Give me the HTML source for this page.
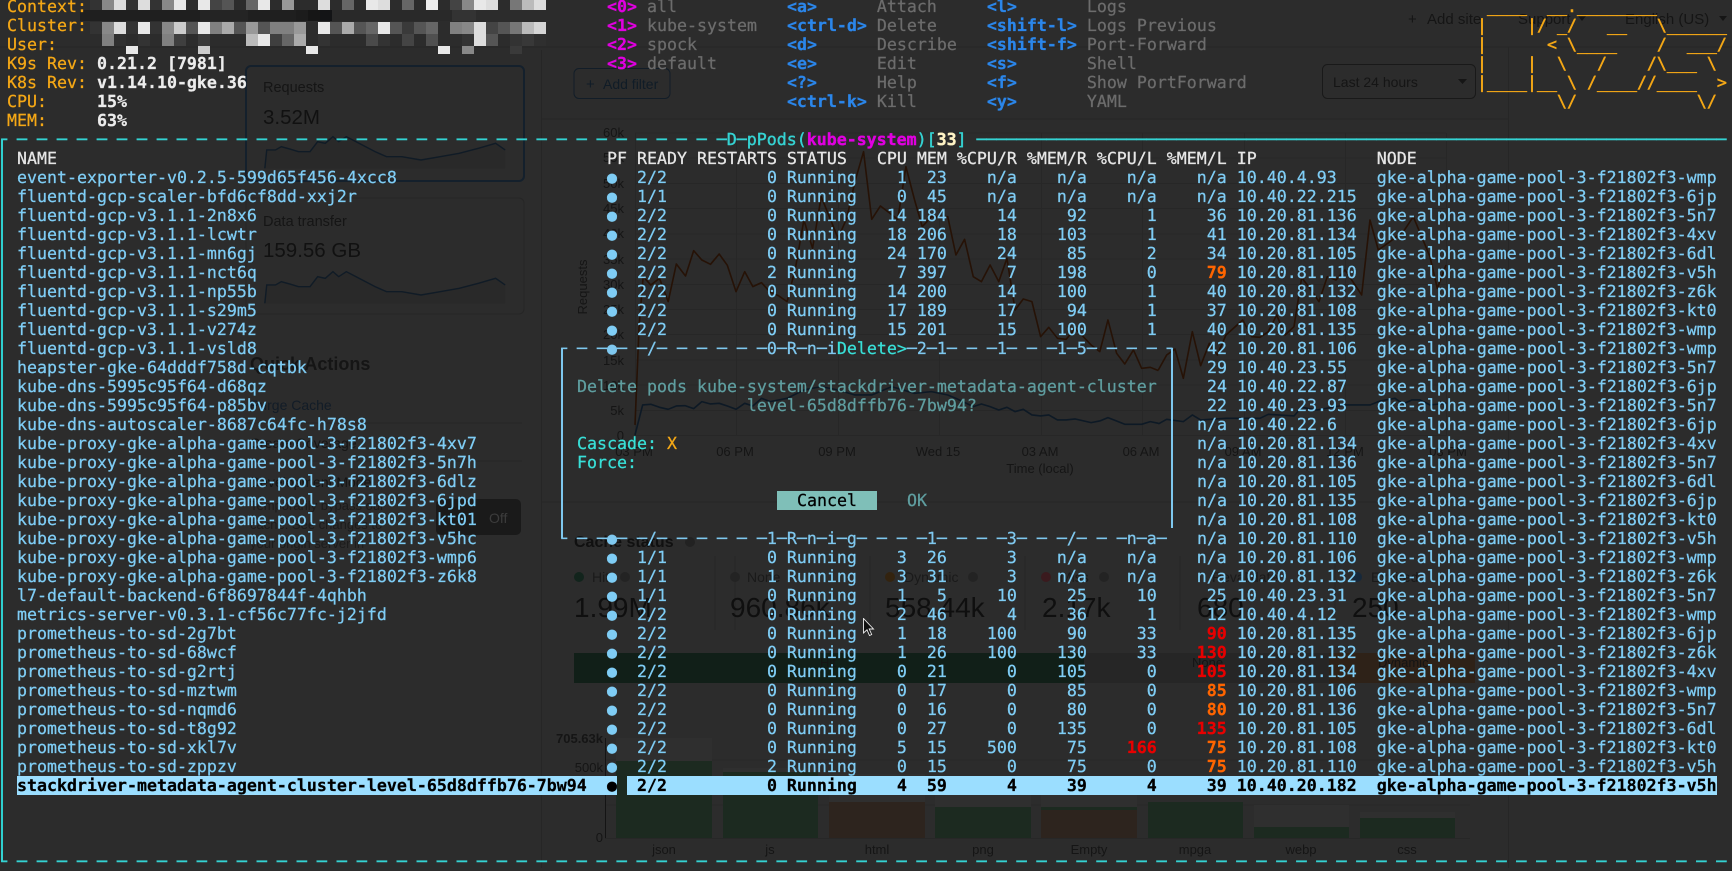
<!DOCTYPE html>
<html lang="en">
<head>
<meta charset="utf-8">
<title>k9s pods</title>
<style>
html,body{margin:0;padding:0;width:1732px;height:868px;overflow:hidden;background:#2c2c2c}
#bg{position:absolute;left:0;top:0}
#bg text{font-family:"Liberation Sans",sans-serif;fill:#151515}
pre{position:absolute;margin:0;font-family:"DejaVu Sans Mono","Liberation Mono",monospace;font-size:16.6px;line-height:19px;letter-spacing:.006px;color:#7fcdf5;text-rendering:geometricPrecision;font-kerning:none;white-space:pre;-webkit-text-stroke:.25px currentColor}
.w{color:#e6e6e6}.wb{color:#ececec;font-weight:bold}
.y{color:#f5a816}
.logo{-webkit-text-stroke:.45px currentColor}
.m{color:#e000e0;font-weight:bold}
.k{color:#2b86ea;font-weight:bold}
.g{color:#6c6c6c}
.c{color:#35d3d3;-webkit-text-stroke:.4px currentColor}
.cr{color:#fff3c4;font-weight:bold}
.r{color:#e80000;font-weight:bold}
.o{color:#ff6500;font-weight:bold}
.t{color:#5f9ea0}
.tc{color:#38e0d8}
.s{color:#000;font-weight:bold}
.box{position:absolute}
</style>
</head>
<body>
<svg id="bg" width="1732" height="868" viewBox="0 0 1732 868" xmlns="http://www.w3.org/2000/svg">
<!-- page structure -->
<g stroke="#262626" stroke-width="1" fill="none">
<path d="M0 47H1732M541.5 50V868M541 119H1509M1508.5 47V868M541 502H1509"/>
<path d="M245 423H522M245 461H522"/>
</g>
<!-- top bar -->
<text x="1408" y="24" font-size="15">+</text>
<text x="1427" y="24" font-size="15">Add site</text>
<text x="1518" y="24" font-size="15">Support</text>
<path d="M1578 16l8 0l-4 5z" fill="#151515"/>
<text x="1625" y="24" font-size="15">English (US)</text>
<path d="M1719 16l8 0l-4 5z" fill="#151515"/>
<!-- filter + select -->
<rect x="574" y="68.5" width="96" height="30" rx="5" fill="none" stroke="#121d28" stroke-width="1"/>
<text x="586" y="89" font-size="15" style="fill:#101c27">+</text>
<text x="603" y="89" font-size="14" style="fill:#101c27">Add filter</text>
<rect x="1322.500" y="64.500" width="153" height="34" rx="5" fill="none" stroke="#191919"/>
<text x="1333" y="87" font-size="14">Last 24 hours</text>
<path d="M1458 79l9 0l-4.500 5z" fill="#151515"/>
<!-- cards -->
<rect x="246" y="66" width="278" height="115" rx="5" fill="none" stroke="#14202c" stroke-width="2"/>
<text x="263" y="92" font-size="14.5">Requests</text>
<text x="263" y="124" font-size="20.500" style="fill:#111">3.52M</text>
<g transform="scale(.3827,.3333)">
<polygon fill="#292929" points="692,505 697,450 720,450 735,440 760,448 780,455 810,455 830,425 850,430 870,410 885,425 905,410 935,428 980,455 1010,470 1050,470 1100,480 1150,470 1200,460 1250,445 1295,430 1320,450 1320,505"/>
<polyline fill="none" stroke="#101b26" stroke-width="1.400" vector-effect="non-scaling-stroke" points="692,505 697,450 720,450 735,440 760,448 780,455 810,455 830,425 850,430 870,410 885,425 905,410 935,428 980,455 1010,470 1050,470 1100,480 1150,470 1200,460 1250,445 1295,430 1320,450"/>
</g>
<rect x="246" y="198" width="278" height="116" rx="5" fill="none" stroke="#262626" stroke-width="1"/>
<text x="263" y="226" font-size="14.5">Data transfer</text>
<text x="263" y="257" font-size="20.500" style="fill:#111">159.56 GB</text>
<g transform="translate(0,135) scale(.3827,.3333)">
<polygon fill="#292929" points="692,505 697,450 720,450 735,440 760,448 780,455 810,455 830,425 850,430 870,410 885,425 905,410 935,428 980,455 1010,470 1050,470 1100,480 1150,470 1200,460 1250,445 1295,430 1320,450 1320,505"/>
<polyline fill="none" stroke="#101b26" stroke-width="1.400" vector-effect="non-scaling-stroke" points="692,505 697,450 720,450 735,440 760,448 780,455 810,455 830,425 850,430 870,410 885,425 905,410 935,428 980,455 1010,470 1050,470 1100,480 1150,470 1200,460 1250,445 1295,430 1320,450"/>
</g>
<!-- quick actions -->
<text x="250" y="370" font-size="18" font-weight="bold" style="fill:#151515">Quick Actions</text>
<text x="250" y="410" font-size="14" style="fill:#121c27">Purge Cache</text>
<text x="250" y="448" font-size="14">Create Coverage</text>
<text x="250" y="487" font-size="14">Development Mode</text>
<text x="250" y="510" font-size="13" style="fill:#1c1c1c">Temporarily bypass our</text>
<text x="250" y="529" font-size="13" style="fill:#1c1c1c">cache. See changes to</text>
<text x="250" y="548" font-size="13" style="fill:#1c1c1c">your origin server in</text>
<rect x="436" y="499" width="85" height="36" rx="5" fill="#1a1a1a"/>
<text x="489" y="523" font-size="14" style="fill:#3c3c3c">Off</text>
<!-- main chart grid -->
<g stroke="#272727" fill="none">
<path d="M635 133H1446M635 158H1446M635 183.500H1446M635 208.500H1446M635 234H1446M635 259H1446M635 284.500H1446M635 309.500H1446M635 334.500H1446M635 360H1446M635 385H1446M635 410.500H1446M635 435.500H1446"/>
<path d="M635.500 133V436M736.500 133V436M838.500 133V436M939.500 133V436M1041.500 133V436M1142.500 133V436M1244.500 133V436M1345.500 133V436M1446.500 133V436"/>
</g>
<g font-size="13" text-anchor="end">
<text x="624" y="137">60k</text><text x="624" y="162">55k</text><text x="624" y="188">50k</text><text x="624" y="213">45k</text><text x="624" y="238">40k</text><text x="624" y="264">35k</text><text x="624" y="289">30k</text><text x="624" y="314">25k</text><text x="624" y="339">20k</text><text x="624" y="365">15k</text><text x="624" y="390">10k</text><text x="624" y="415">5k</text><text x="624" y="440">0</text>
</g>
<g font-size="13" text-anchor="middle">
<text x="634" y="456">03 PM</text><text x="735" y="456">06 PM</text><text x="837" y="456">09 PM</text><text x="938" y="456">Wed 15</text><text x="1040" y="456">03 AM</text><text x="1141" y="456">06 AM</text><text x="1243" y="456">09 AM</text><text x="1345" y="456">12 PM</text><text x="1448" y="456">03 PM</text>
<text x="1040" y="473">Time (local)</text>
<text transform="translate(587,287) rotate(-90)">Requests</text>
</g>
<!-- series -->
<g fill="none" stroke-width="1.600" stroke-linejoin="round">
<polyline transform="translate(560,120) scale(.5102,.3333)" vector-effect="non-scaling-stroke" stroke="#261206" points="147,915 155,620 163,470 178,495 195,475 212,545 228,432 246,468 262,392 278,420 295,433 312,402 328,436 345,515 362,455 378,500 395,488 412,517 428,527 445,545 462,440 478,300 495,385 512,230 528,290 545,355 562,295 578,185 595,95 611,298 628,258 645,278 662,298 678,140 695,240 710,320 728,290 760,290 776,405 793,358 810,470 826,485 843,435 860,485 876,415 892,570 908,537 925,545 942,650 958,622 975,655 992,658 1010,625 1041,675 1058,695 1074,600 1091,700 1107,732 1124,690 1140,745 1157,742 1173,752"/>
<polyline transform="translate(1150,200) scale(.3333)" vector-effect="non-scaling-stroke" stroke="#261206" points="25,510 50,465 75,447 100,535 127,395 152,497 178,430 202,465 228,405 278,360 305,410 330,412 355,395 380,345 405,405 432,380 455,233 480,265 507,305 532,230 558,240 585,210 635,285 660,60 685,150 720,125 762,92 790,50 815,110 840,170 862,265 888,195"/>
<polyline transform="translate(560,120) scale(.5102,.3333)" vector-effect="non-scaling-stroke" stroke="#0d1925" points="147,945 162,855 178,853 195,862 212,868 228,858 245,857 262,866 278,845 295,852 312,850 328,858 345,868 362,850 378,858 395,835 412,845 445,835 478,810 512,800 545,810 578,825 611,825 650,800 695,820 728,815 760,825 776,835 810,860 826,852 843,860 860,870 876,862 892,875 908,868 925,885 942,888 958,885 975,900 992,900 1010,897 1041,908 1058,903 1074,893 1091,903 1107,913 1140,913 1157,905 1173,910"/>
<polyline transform="translate(1150,200) scale(.3333)" vector-effect="non-scaling-stroke" stroke="#0d1925" points="25,672 50,658 100,665 127,645 152,660 228,655 330,655 355,643 432,648 455,622 500,630 585,615 660,615 690,603 735,595 760,612 785,600 810,600 840,615 890,610"/>
</g>
<!-- cache status -->
<text x="574" y="547" font-size="16" font-weight="bold" style="fill:#101010">Cache status</text>
<circle cx="690" cy="542" r="5" fill="#222"/>
<g fill="none" stroke="#262626"><path d="M735 556V630M715 556V630M870 556V630M1025 556V630M1180 556V630M1335 556V630"/></g>
<circle cx="579" cy="577" r="5" fill="#12241c"/><circle cx="625" cy="577" r="5" fill="#232323"/>
<circle cx="735" cy="577" r="5" fill="#232323"/><circle cx="973" cy="577" r="5" fill="#232323"/>
<circle cx="890" cy="577" r="5" fill="#33230f"/><circle cx="1104" cy="577" r="5" fill="#232323"/>
<circle cx="1046" cy="577" r="5" fill="#3a1a1e"/><circle cx="1357" cy="577" r="5" fill="#16283a"/>
<g font-size="14">
<text x="592" y="582" style="fill:#1a1a1a">Hit</text>
<text x="747" y="582" style="fill:#1a1a1a">None</text>
<text x="904" y="582" style="fill:#1a1a1a">Dynamic</text>
<text x="1060" y="582" style="fill:#1a1a1a">Miss</text>
<text x="1212" y="582" style="fill:#1a1a1a">Revalidated</text>
<text x="1371" y="582" style="fill:#1a1a1a">Expired</text>
</g>
<g font-size="28">
<text x="574" y="617" style="fill:#0f0f0f">1.99M</text>
<text x="730" y="617" style="fill:#0f0f0f">960.86k</text>
<text x="885" y="617" style="fill:#0f0f0f">558.44k</text>
<text x="1042" y="617" style="fill:#0f0f0f">2.17k</text>
<text x="1197" y="617" style="fill:#0f0f0f">680</text>
<text x="1352" y="617" style="fill:#0f0f0f">250</text>
</g>
<rect x="574" y="653" width="510" height="30" fill="#111f18"/>
<rect x="1084" y="653" width="245" height="30" fill="#262626"/>
<rect x="1329" y="653" width="146" height="30" fill="#2e2218"/>
<g font-size="13">
<text x="820" y="667">Hit</text>
<text x="1192" y="667">None</text>
<text x="1378" y="667">Dynamic</text>
</g>
<!-- bars -->
<g stroke="#272727" fill="none"><path d="M605 760H1470M605 805H1470M605 838.500H1470"/></g>
<path d="M605.500 738V838" stroke="#141414" fill="none"/>
<g font-size="13" text-anchor="end">
<text x="603" y="743" font-weight="bold">705.63k</text>
<text x="603" y="772">500k</text>
<text x="603" y="842">0</text>
</g>
<g>
<rect x="616" y="738" width="96" height="23" fill="#2f2f2f"/><rect x="616" y="761" width="96" height="77" fill="#1c2a20"/>
<rect x="723" y="768" width="95" height="4" fill="#2f2f2f"/><rect x="723" y="772" width="95" height="66" fill="#1c2a20"/>
<rect x="829" y="774" width="96" height="28" fill="#2f2f2f"/><rect x="829" y="802" width="96" height="36" fill="#2d241e"/>
<rect x="935" y="780" width="96" height="27" fill="#2f2f2f"/><rect x="935" y="807" width="96" height="31" fill="#1c2a20"/>
<rect x="1041" y="793" width="96" height="14" fill="#2f2f2f"/><rect x="1041" y="807" width="96" height="3" fill="#1c2a20"/><rect x="1041" y="810" width="96" height="28" fill="#2d241e"/>
<rect x="1148" y="802" width="95" height="36" fill="#1c2a20"/>
<rect x="1254" y="805" width="95" height="22" fill="#2f2f2f"/><rect x="1254" y="827" width="95" height="11" fill="#1c2a20"/>
<rect x="1360" y="812" width="95" height="6" fill="#2f2f2f"/><rect x="1360" y="818" width="95" height="20" fill="#1c2a20"/>
</g>
<g font-size="13" text-anchor="middle">
<text x="664" y="854">json</text><text x="770" y="854">js</text><text x="877" y="854">html</text><text x="983" y="854">png</text><text x="1089" y="854">Empty</text><text x="1195" y="854">mpga</text><text x="1301" y="854">webp</text><text x="1407" y="854">css</text>
</g>
<!-- mosaic -->
<g>
<rect x="80" y="10" width="264" height="11" fill="#1f1f1f"/><rect x="200" y="10" width="48" height="11" fill="#242424"/><rect x="296" y="10" width="12" height="11" fill="#1c1c1c"/><rect x="308" y="10" width="12" height="11" fill="#161616"/><rect x="320" y="10" width="12" height="11" fill="#131416"/><rect x="332" y="10" width="120" height="11" fill="#292929"/><rect x="452" y="10" width="24" height="11" fill="#333"/>
<rect x="90" y="0" width="12" height="10" fill="#333"/><rect x="102" y="0" width="12" height="10" fill="#888"/><rect x="114" y="0" width="12" height="10" fill="#ddd"/><rect x="126" y="0" width="12" height="10" fill="#333"/><rect x="138" y="0" width="12" height="10" fill="#ddd"/><rect x="150" y="0" width="12" height="10" fill="#333"/><rect x="162" y="0" width="12" height="10" fill="#888"/><rect x="174" y="0" width="12" height="10" fill="#e8e8e8"/><rect x="198" y="0" width="12" height="10" fill="#e8e8e8"/><rect x="210" y="0" width="12" height="10" fill="#444"/><rect x="222" y="0" width="12" height="10" fill="#555"/><rect x="246" y="0" width="12" height="10" fill="#666"/><rect x="258" y="0" width="12" height="10" fill="#e8e8e8"/><rect x="282" y="0" width="12" height="10" fill="#999"/><rect x="318" y="0" width="12" height="10" fill="#ddd"/><rect x="342" y="0" width="12" height="10" fill="#666"/><rect x="366" y="0" width="12" height="10" fill="#e8e8e8"/><rect x="378" y="0" width="12" height="10" fill="#ddd"/><rect x="402" y="0" width="12" height="10" fill="#666"/><rect x="426" y="0" width="12" height="10" fill="#eee"/><rect x="450" y="0" width="12" height="10" fill="#444"/><rect x="462" y="0" width="12" height="10" fill="#888"/><rect x="474" y="0" width="12" height="10" fill="#e8e8e8"/><rect x="486" y="0" width="12" height="10" fill="#ddd"/><rect x="510" y="0" width="12" height="10" fill="#777"/><rect x="522" y="0" width="12" height="10" fill="#bbb"/><rect x="534" y="0" width="12" height="10" fill="#ddd"/>
<rect x="90" y="22" width="12" height="12" fill="#333"/><rect x="102" y="22" width="12" height="12" fill="#888"/><rect x="114" y="22" width="12" height="12" fill="#ddd"/><rect x="126" y="22" width="12" height="12" fill="#333"/><rect x="138" y="22" width="12" height="12" fill="#e8e8e8"/><rect x="150" y="22" width="12" height="12" fill="#333"/><rect x="162" y="22" width="12" height="12" fill="#888"/><rect x="174" y="22" width="12" height="12" fill="#ccc"/><rect x="186" y="22" width="12" height="12" fill="#555"/><rect x="198" y="22" width="12" height="12" fill="#e8e8e8"/><rect x="210" y="22" width="12" height="12" fill="#808080"/><rect x="222" y="22" width="12" height="12" fill="#aaa"/><rect x="234" y="22" width="12" height="12" fill="#555"/><rect x="246" y="22" width="12" height="12" fill="#999"/><rect x="258" y="22" width="12" height="12" fill="#555"/><rect x="270" y="22" width="24" height="12" fill="#808080"/><rect x="294" y="22" width="12" height="12" fill="#999"/><rect x="318" y="22" width="12" height="12" fill="#e8e8e8"/><rect x="330" y="22" width="12" height="12" fill="#555"/><rect x="342" y="22" width="12" height="12" fill="#aaa"/><rect x="354" y="22" width="12" height="12" fill="#555"/><rect x="366" y="22" width="12" height="12" fill="#666"/><rect x="378" y="22" width="12" height="12" fill="#e8e8e8"/><rect x="390" y="22" width="12" height="12" fill="#555"/><rect x="402" y="22" width="12" height="12" fill="#3a3a3a"/><rect x="414" y="22" width="12" height="12" fill="#555"/><rect x="426" y="22" width="12" height="12" fill="#666"/><rect x="450" y="22" width="12" height="12" fill="#808080"/><rect x="462" y="22" width="12" height="12" fill="#888"/><rect x="474" y="22" width="12" height="12" fill="#ddd"/><rect x="486" y="22" width="12" height="12" fill="#444"/><rect x="498" y="22" width="12" height="12" fill="#555"/><rect x="510" y="22" width="12" height="12" fill="#777"/><rect x="522" y="22" width="12" height="12" fill="#bbb"/><rect x="534" y="22" width="12" height="12" fill="#d5d5d5"/>
<rect x="102" y="34" width="12" height="12" fill="#808080"/><rect x="114" y="34" width="12" height="12" fill="#303030"/><rect x="138" y="34" width="12" height="12" fill="#333"/><rect x="162" y="34" width="12" height="12" fill="#808080"/><rect x="174" y="34" width="12" height="12" fill="#3f3f3f"/><rect x="198" y="34" width="12" height="12" fill="#3a3a3a"/><rect x="246" y="34" width="12" height="12" fill="#bbb"/><rect x="258" y="34" width="12" height="12" fill="#e8e8e8"/><rect x="270" y="34" width="12" height="12" fill="#3f3f3f"/><rect x="282" y="34" width="12" height="12" fill="#666"/><rect x="294" y="34" width="12" height="12" fill="#aaa"/><rect x="318" y="34" width="12" height="12" fill="#333"/><rect x="366" y="34" width="12" height="12" fill="#4a4a4a"/><rect x="378" y="34" width="12" height="12" fill="#333"/><rect x="402" y="34" width="12" height="12" fill="#444"/><rect x="426" y="34" width="12" height="12" fill="#505050"/><rect x="462" y="34" width="12" height="12" fill="#333"/><rect x="474" y="34" width="12" height="12" fill="#ddd"/><rect x="486" y="34" width="12" height="12" fill="#555"/><rect x="510" y="34" width="12" height="12" fill="#333"/><rect x="522" y="34" width="12" height="12" fill="#383838"/><rect x="534" y="34" width="12" height="12" fill="#2f2f2f"/>
<rect x="126" y="46" width="12" height="8" fill="#e8e8e8"/><rect x="198" y="46" width="12" height="8" fill="#ccc"/><rect x="306" y="46" width="12" height="8" fill="#e8e8e8"/><rect x="438" y="46" width="12" height="8" fill="#e8e8e8"/><rect x="462" y="46" width="12" height="8" fill="#888"/><rect x="510" y="46" width="12" height="8" fill="#3a3a3a"/>
</g>
</svg>

<div class="box" style="left:17px;top:776px;width:600px;height:19px;background:#9bdeff"></div>
<div class="box" style="left:627px;top:776px;width:1090px;height:19px;background:#9bdeff"></div>
<div class="box" style="left:777px;top:491px;width:100px;height:19px;background:#7fbfb8"></div>
<div class="box" style="left:1px;top:139px;width:2px;height:723px;background:#2fcfcf"></div>
<div class="box" style="left:561px;top:348px;width:2px;height:190px;background:#7fc8ef"></div>
<div class="box" style="left:1171px;top:348px;width:2px;height:180px;background:#7fc8ef"></div>

<pre class="y" style="left:7px;top:-3px">Context:
Cluster:
User:
K9s Rev: <span class="wb">0.21.2 [7981]</span>
K8s Rev: <span class="wb">v1.14.10-gke.36</span>
CPU:     <span class="wb">15%</span>
MEM:     <span class="wb">63%</span></pre>

<pre class="g" style="left:607px;top:-3px"><span class="m">&lt;0&gt;</span> all           <span class="k">&lt;a&gt;</span>      Attach     <span class="k">&lt;l&gt;</span>       Logs
<span class="m">&lt;1&gt;</span> kube-system   <span class="k">&lt;ctrl-d&gt;</span> Delete     <span class="k">&lt;shift-l&gt;</span> Logs Previous
<span class="m">&lt;2&gt;</span> spock         <span class="k">&lt;d&gt;</span>      Describe   <span class="k">&lt;shift-f&gt;</span> Port-Forward
<span class="m">&lt;3&gt;</span> default       <span class="k">&lt;e&gt;</span>      Edit       <span class="k">&lt;s&gt;</span>       Shell
                  <span class="k">&lt;?&gt;</span>      Help       <span class="k">&lt;f&gt;</span>       Show PortForward
                  <span class="k">&lt;ctrl-k&gt;</span> Kill       <span class="k">&lt;y&gt;</span>       YAML</pre>

<pre class="y logo" style="left:1477px;top:-3px"> ____  __.________       
|    |/ _/   __   \______
|      &lt; \____    /  ___/
|    |  \   /    /\___ \ 
|____|__ \ /____//____  &gt;
        \/            \/ </pre>

<pre class="c" style="left:-3px;top:130px">┌ ─ ─ ─ ─ ─ ─ ─ ─ ─ ─ ─ ─ ─ ─ ─ ─ ─ ─ ─ ─ ─ ─ ─ ─ ─ ─ ─ ─ ─ ─ ─ ─ ─ ─ ─ ─D─pPods(<span class="m">kube-system</span>)[<span class="cr">33</span>] ───────────────────────────────────────────────────────────────────────────</pre>
<pre class="c" style="left:-3px;top:852px">└ ─ ─ ─ ─ ─ ─ ─ ─ ─ ─ ─ ─ ─ ─ ─ ─ ─ ─ ─ ─ ─ ─ ─ ─ ─ ─ ─ ─ ─ ─ ─ ─ ─ ─ ─ ─ ─ ─ ─ ─ ─ ─ ─ ─ ─ ─ ─ ─ ─ ─ ─ ─ ─ ─ ─ ─ ─ ─ ─ ─ ─ ─ ─ ─ ─ ─ ─ ─ ─ ─ ─ ─ ─ ─ ─ ─ ─ ─ ─ ─ ─ ─ ─ ─ ─ ─</pre>

<pre style="left:17px;top:149px"><span class="w">NAME</span>
event-exporter-v0.2.5-599d65f456-4xcc8
fluentd-gcp-scaler-bfd6cf8dd-xxj2r
fluentd-gcp-v3.1.1-2n8x6
fluentd-gcp-v3.1.1-lcwtr
fluentd-gcp-v3.1.1-mn6gj
fluentd-gcp-v3.1.1-nct6q
fluentd-gcp-v3.1.1-np55b
fluentd-gcp-v3.1.1-s29m5
fluentd-gcp-v3.1.1-v274z
fluentd-gcp-v3.1.1-vsld8
heapster-gke-64dddf758d-cqtbk
kube-dns-5995c95f64-d68qz
kube-dns-5995c95f64-p85bv
kube-dns-autoscaler-8687c64fc-h78s8
kube-proxy-gke-alpha-game-pool-3-f21802f3-4xv7
kube-proxy-gke-alpha-game-pool-3-f21802f3-5n7h
kube-proxy-gke-alpha-game-pool-3-f21802f3-6dlz
kube-proxy-gke-alpha-game-pool-3-f21802f3-6jpd
kube-proxy-gke-alpha-game-pool-3-f21802f3-kt01
kube-proxy-gke-alpha-game-pool-3-f21802f3-v5hc
kube-proxy-gke-alpha-game-pool-3-f21802f3-wmp6
kube-proxy-gke-alpha-game-pool-3-f21802f3-z6k8
l7-default-backend-6f8697844f-4qhbh
metrics-server-v0.3.1-cf56c77fc-j2jfd
prometheus-to-sd-2g7bt
prometheus-to-sd-68wcf
prometheus-to-sd-g2rtj
prometheus-to-sd-mztwm
prometheus-to-sd-nqmd6
prometheus-to-sd-t8g92
prometheus-to-sd-xkl7v
prometheus-to-sd-zppzv
<span class="s">stackdriver-metadata-agent-cluster-level-65d8dffb76-7bw94</span></pre>

<pre style="left:607px;top:149px"><span class="w">PF READY RESTARTS STATUS   CPU MEM %CPU/R %MEM/R %CPU/L %MEM/L IP            NODE</span>
●  2/2          0 Running    1  23    n/a    n/a    n/a    n/a 10.40.4.93    gke-alpha-game-pool-3-f21802f3-wmp
●  1/1          0 Running    0  45    n/a    n/a    n/a    n/a 10.40.22.215  gke-alpha-game-pool-3-f21802f3-6jp
●  2/2          0 Running   14 184     14     92      1     36 10.20.81.136  gke-alpha-game-pool-3-f21802f3-5n7
●  2/2          0 Running   18 206     18    103      1     41 10.20.81.134  gke-alpha-game-pool-3-f21802f3-4xv
●  2/2          0 Running   24 170     24     85      2     34 10.20.81.105  gke-alpha-game-pool-3-f21802f3-6dl
●  2/2          2 Running    7 397      7    198      0     <span class="o">79</span> 10.20.81.110  gke-alpha-game-pool-3-f21802f3-v5h
●  2/2          0 Running   14 200     14    100      1     40 10.20.81.132  gke-alpha-game-pool-3-f21802f3-z6k
●  2/2          0 Running   17 189     17     94      1     37 10.20.81.108  gke-alpha-game-pool-3-f21802f3-kt0
●  2/2          0 Running   15 201     15    100      1     40 10.20.81.135  gke-alpha-game-pool-3-f21802f3-wmp</pre>

<pre style="left:557px;top:339px;color:#7fc8ef">┌ ─ ─●─ ─/─ ─ ─ ─ ─ ─0─R─n─i<span class="tc">Delete&gt;</span>─2─1─ ─ ─1─ ─ ─1─5─ ─ ─ ─ ┐</pre>
<pre style="left:557px;top:529px;color:#7fc8ef">└ ─ ─●─ ─/─ ─ ─ ─ ─ ─1─R─n─i─g─ ─ ─ ─1─ ─ ─ ─3─ ─ ─/─ ─ ─n─a─</pre>

<pre class="t" style="left:577px;top:377px">Delete pods kube-system/stackdriver-metadata-agent-cluster
                 level-65d8dffb76-7bw94?</pre>
<pre class="tc" style="left:577px;top:434px">Cascade: <span class="y">X</span>
Force:</pre>
<pre style="left:797px;top:491px;color:#000">Cancel</pre>
<pre class="t" style="left:907px;top:491px">OK</pre>

<pre style="left:1177px;top:339px">   42 10.20.81.106  gke-alpha-game-pool-3-f21802f3-wmp
   29 10.40.23.55   gke-alpha-game-pool-3-f21802f3-5n7
   24 10.40.22.87   gke-alpha-game-pool-3-f21802f3-6jp
   22 10.40.23.93   gke-alpha-game-pool-3-f21802f3-5n7
  n/a 10.40.22.6    gke-alpha-game-pool-3-f21802f3-6jp
  n/a 10.20.81.134  gke-alpha-game-pool-3-f21802f3-4xv
  n/a 10.20.81.136  gke-alpha-game-pool-3-f21802f3-5n7
  n/a 10.20.81.105  gke-alpha-game-pool-3-f21802f3-6dl
  n/a 10.20.81.135  gke-alpha-game-pool-3-f21802f3-6jp
  n/a 10.20.81.108  gke-alpha-game-pool-3-f21802f3-kt0
  n/a 10.20.81.110  gke-alpha-game-pool-3-f21802f3-v5h</pre>

<pre style="left:607px;top:548px">●  1/1          0 Running    3  26      3    n/a    n/a    n/a 10.20.81.106  gke-alpha-game-pool-3-f21802f3-wmp
●  1/1          1 Running    3  31      3    n/a    n/a    n/a 10.20.81.132  gke-alpha-game-pool-3-f21802f3-z6k
●  1/1          0 Running    1   5     10     25     10     25 10.40.23.31   gke-alpha-game-pool-3-f21802f3-5n7
●  2/2          0 Running    2  46      4     36      1     12 10.40.4.12    gke-alpha-game-pool-3-f21802f3-wmp
●  2/2          0 Running    1  18    100     90     33     <span class="r">90</span> 10.20.81.135  gke-alpha-game-pool-3-f21802f3-6jp
●  2/2          0 Running    1  26    100    130     33    <span class="r">130</span> 10.20.81.132  gke-alpha-game-pool-3-f21802f3-z6k
●  2/2          0 Running    0  21      0    105      0    <span class="r">105</span> 10.20.81.134  gke-alpha-game-pool-3-f21802f3-4xv
●  2/2          0 Running    0  17      0     85      0     <span class="o">85</span> 10.20.81.106  gke-alpha-game-pool-3-f21802f3-wmp
●  2/2          0 Running    0  16      0     80      0     <span class="o">80</span> 10.20.81.136  gke-alpha-game-pool-3-f21802f3-5n7
●  2/2          0 Running    0  27      0    135      0    <span class="r">135</span> 10.20.81.105  gke-alpha-game-pool-3-f21802f3-6dl
●  2/2          0 Running    5  15    500     75    <span class="r">166</span>     <span class="o">75</span> 10.20.81.108  gke-alpha-game-pool-3-f21802f3-kt0
●  2/2          2 Running    0  15      0     75      0     <span class="o">75</span> 10.20.81.110  gke-alpha-game-pool-3-f21802f3-v5h
<span class="s">●  2/2          0 Running    4  59      4     39      4     39 10.40.20.182  gke-alpha-game-pool-3-f21802f3-v5h</span></pre>

<svg class="box" style="left:863px;top:618px" width="12" height="19" viewBox="0 0 12 19" xmlns="http://www.w3.org/2000/svg"><path d="M.5 .5V15L4 11.800L6.500 17.500L8.700 16.500L6.200 11H10.500Z" fill="#111" stroke="#eee" stroke-width=".9"/></svg>
</body>
</html>
